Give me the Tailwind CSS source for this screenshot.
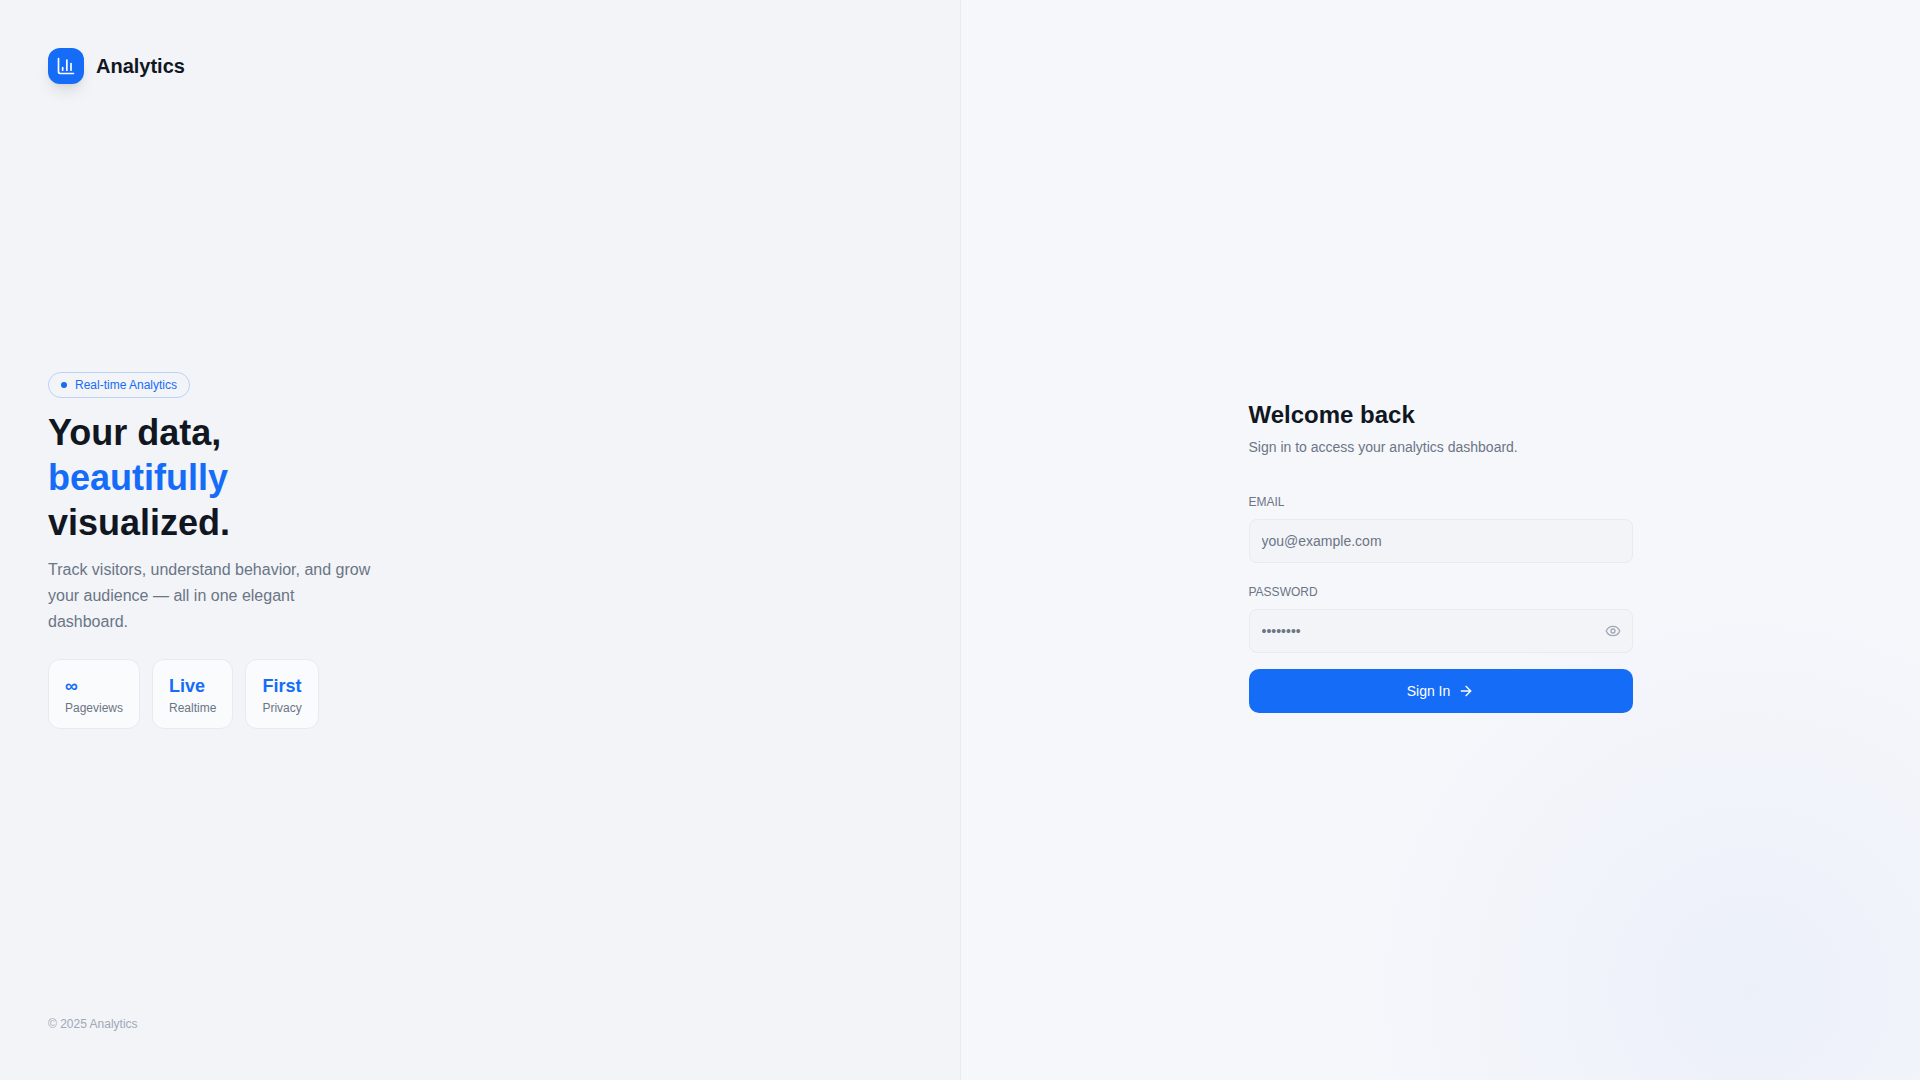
<!DOCTYPE html>
<html lang="en">

<head>
    <meta charset="UTF-8">
    <meta name="viewport" content="width=device-width, initial-scale=1.0">
    <script src="https://cdn.jsdelivr.net/npm/@tailwindcss/browser@4"></script>
    <title>Analytics - Sign In</title>
</head>

<body class="bg-[#f6f7fb] font-['Liberation_Sans',Arial,sans-serif] text-[#111722] antialiased">

<div class="grid min-h-screen grid-cols-1 lg:grid-cols-2">

    <!-- Brand panel -->
    <aside class="flex flex-col justify-between bg-[#f2f4f8] p-12">
        <div class="flex items-center gap-3">
            <div class="flex size-9 items-center justify-center rounded-xl bg-[#156cf7] text-white shadow-lg">
                <svg class="size-5" viewBox="0 0 24 24" fill="none" stroke="currentColor" stroke-width="2" stroke-linecap="round" stroke-linejoin="round" aria-hidden="true">
                    <path d="M3 3v16a2 2 0 0 0 2 2h16" />
                    <path d="M18 17V9" />
                    <path d="M13 17V5" />
                    <path d="M8 17v-3" />
                </svg>
            </div>
            <span class="text-xl font-bold">Analytics</span>
        </div>

        <div class="flex flex-col items-start">
            <div class="flex items-center gap-2 rounded-full border border-[#156cf7]/25 px-3 py-1 text-xs text-[#156cf7]">
                <span class="size-1.5 rounded-full bg-[#156cf7]"></span>
                Real-time Analytics
            </div>
            <h1 class="mt-3 text-4xl leading-[45px] font-bold">
                Your data,<br>
                <span class="text-[#156cf7]">beautifully</span><br>
                visualized.
            </h1>
            <p class="mt-3 max-w-[326px] text-base leading-[26px] text-[#6b7585]">
                Track visitors, understand behavior, and grow your audience — all in one elegant dashboard.
            </p>

            <!-- Highlights -->
            <div class="mt-6 flex gap-3">
                <div class="rounded-xl border border-[#e8eaee] bg-[#fafbfd] px-4 py-3">
                    <div class="text-lg leading-7 font-bold text-[#156cf7]">∞</div>
                    <div class="text-xs text-[#6b7585]">Pageviews</div>
                </div>
                <div class="rounded-xl border border-[#e8eaee] bg-[#fafbfd] px-4 py-3">
                    <div class="text-lg leading-7 font-bold text-[#156cf7]">Live</div>
                    <div class="text-xs text-[#6b7585]">Realtime</div>
                </div>
                <div class="rounded-xl border border-[#e8eaee] bg-[#fafbfd] px-4 py-3">
                    <div class="text-lg leading-7 font-bold text-[#156cf7]">First</div>
                    <div class="text-xs text-[#6b7585]">Privacy</div>
                </div>
            </div>
        </div>

        <p class="text-xs text-[#a1a8b6]">© 2025 Analytics</p>
    </aside>

    <!-- Sign in panel -->
    <main class="relative flex items-center justify-center overflow-hidden border-l border-[#e8eaee] px-6 pt-8">
        <!-- Glow in the corner -->
        <div class="pointer-events-none absolute -right-[250px] -bottom-[330px] size-[840px] bg-[radial-gradient(circle_closest-side,#1f62d00c_0%,#1f62d009_25%,#1f62d006_50%,#1f62d003_75%,#1f62d000_100%)]"></div>

        <div class="relative w-full max-w-sm">
            <h2 class="text-2xl leading-8 font-bold">Welcome back</h2>
            <p class="mt-1.5 text-sm text-[#6b7585]">Sign in to access your analytics dashboard.</p>

            <form class="mt-8 flex flex-col gap-4">
                <div>
                    <label for="email" class="block text-xs leading-[26px] text-[#6b7585]">EMAIL</label>
                    <input id="email" type="email" placeholder="you@example.com" class="mt-1 block h-11 w-full rounded-lg border border-[#e8eaee] bg-[#f3f4f8] px-3 text-sm placeholder:text-[#6b7585]">
                </div>
                <div>
                    <label for="password" class="block text-xs leading-[26px] text-[#6b7585]">PASSWORD</label>
                    <div class="relative mt-1">
                        <input id="password" type="password" placeholder="••••••••" class="block h-11 w-full rounded-lg border border-[#e8eaee] bg-[#f3f4f8] pr-10 pl-3 text-sm placeholder:text-[#6b7585]">
                        <button type="button" aria-label="Show password" class="absolute inset-y-0 right-3 flex items-center text-[#a1a8b6]">
                            <svg class="size-4" viewBox="0 0 24 24" fill="none" stroke="currentColor" stroke-width="2" stroke-linecap="round" stroke-linejoin="round" aria-hidden="true">
                                <path d="M2.062 12.348a1 1 0 0 1 0-.696 10.75 10.75 0 0 1 19.876 0 1 1 0 0 1 0 .696 10.75 10.75 0 0 1-19.876 0" />
                                <circle cx="12" cy="12" r="3" />
                            </svg>
                        </button>
                    </div>
                </div>
                <button type="submit" class="flex h-11 w-full items-center justify-center gap-2 rounded-[10px] bg-[#156cf7] text-sm text-white">
                    Sign In
                    <svg class="size-4" viewBox="0 0 24 24" fill="none" stroke="currentColor" stroke-width="2" stroke-linecap="round" stroke-linejoin="round" aria-hidden="true">
                        <path d="M5 12h14" />
                        <path d="m12 5 7 7-7 7" />
                    </svg>
                </button>
            </form>
        </div>
    </main>

</div>

</body>
</html>
